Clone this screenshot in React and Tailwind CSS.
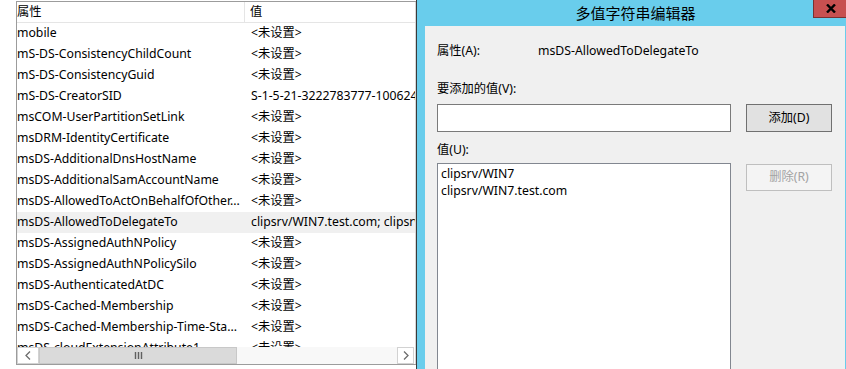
import React from 'react';

const ROWS = [
  ['mobile', '<未设置>'],
  ['mS-DS-ConsistencyChildCount', '<未设置>'],
  ['mS-DS-ConsistencyGuid', '<未设置>'],
  ['mS-DS-CreatorSID', 'S-1-5-21-3222783777-1006248391-1234567890-1105'],
  ['msCOM-UserPartitionSetLink', '<未设置>'],
  ['msDRM-IdentityCertificate', '<未设置>'],
  ['msDS-AdditionalDnsHostName', '<未设置>'],
  ['msDS-AdditionalSamAccountName', '<未设置>'],
  ['msDS-AllowedToActOnBehalfOfOther...', '<未设置>'],
  ['msDS-AllowedToDelegateTo', 'clipsrv/WIN7.test.com; clipsrv/WIN7'],
  ['msDS-AssignedAuthNPolicy', '<未设置>'],
  ['msDS-AssignedAuthNPolicySilo', '<未设置>'],
  ['msDS-AuthenticatedAtDC', '<未设置>'],
  ['msDS-Cached-Membership', '<未设置>'],
  ['msDS-Cached-Membership-Time-Sta...', '<未设置>'],
  ['msDS-cloudExtensionAttribute1', '<未设置>'],
];

const SELECTED = 'msDS-AllowedToDelegateTo';

const Chevron = ({ dir }) => (
  <svg width="6" height="9" viewBox="0 0 6 9">
    <path
      d={dir === 'left' ? 'M5 0.5 L1 4.5 L5 8.5' : 'M1 0.5 L5 4.5 L1 8.5'}
      fill="none"
      stroke="#6d6d6d"
      strokeWidth="1.3"
    />
  </svg>
);

const App = () => {
  return (
    <div
      className="w-[846px] h-[369px] flex overflow-hidden bg-white text-[12.25px] text-black"
      style={{ fontFamily: '"Noto Sans", "Noto Sans CJK SC", sans-serif' }}
    >
      {/* 属性列表 */}
      <div className="w-[416px] h-full shrink-0 bg-white pl-[16px] pt-[1px] pb-[4px] flex">
        <div className="flex-1 flex border-l border-t border-b border-[#9c9c9c] bg-white overflow-hidden">
          <div className="w-[398px] shrink-0 flex flex-col">
            <div className="h-[21px] shrink-0 flex items-center border-b border-[#e5e5e5]">
              <div className="w-[228px] h-full flex items-center border-r border-[#e5e5e5]">属性</div>
              <div className="pl-[5px]">值</div>
            </div>
            <div className="flex-1 overflow-hidden">
              {ROWS.map(([name, value]) => (
                <div
                  key={name}
                  className={`h-[21px] flex items-center whitespace-nowrap ${name === SELECTED ? 'bg-[#f0f0f0]' : ''}`}
                >
                  <div className="w-[228px] shrink-0 overflow-hidden">{name}</div>
                  <div className="pl-[6px] overflow-hidden">{value}</div>
                </div>
              ))}
            </div>
            <div className="h-[17px] shrink-0 flex bg-[#f8f8f8] mr-[1px]">
              <div className="w-[22px] flex items-center justify-center border border-[#d2d2d2] bg-white">
                <Chevron dir="left" />
              </div>
              <div className="w-[198px] flex items-center justify-center bg-[#dadada] border border-[#c8c8c8]">
                <svg width="9" height="7" viewBox="0 0 9 7">
                  <path d="M1.5 0 V7 M4.5 0 V7 M7.5 0 V7" stroke="#606060" strokeWidth="1.4" />
                </svg>
              </div>
              <div className="flex-1" />
              <div className="w-[17px] flex items-center justify-center border border-[#d2d2d2] bg-white">
                <Chevron dir="right" />
              </div>
            </div>
          </div>
          <div className="flex-1 border-l border-[#d6d6d6] bg-[#f0f0f0]" />
        </div>
      </div>

      {/* 多值字符串编辑器 */}
      <div className="flex-1 h-full flex flex-col border-l border-[#3a3a3a] bg-[#69cdec]">
        <div className="h-[26px] shrink-0 relative flex items-center justify-center pl-[8px] text-[15px]">
          多值字符串编辑器
          <div className="absolute top-0 right-[-1px] w-[34px] h-[18px] bg-[#c75050] border-l border-b border-[#7a3131] flex items-center justify-center">
            <svg width="10" height="9" viewBox="0 0 10 9">
              <path d="M1 0.5 L9 8.5 M9 0.5 L1 8.5" stroke="#000" strokeWidth="2.4" />
            </svg>
          </div>
        </div>
        <div className="flex-1 flex pl-[8px] pr-[1px] min-h-0">
          <div className="flex-1 bg-[#f0f0f0] pt-[17px] pl-[12px] flex flex-col min-h-0">
            <div className="flex leading-[16px]">
              <div className="w-[101px]">属性(A):</div>
              <div>msDS-AllowedToDelegateTo</div>
            </div>
            <div className="mt-[22px] leading-[16px]">要添加的值(V):</div>
            <div className="mt-[7px] flex">
              <div className="w-[294px] h-[28px] border border-[#7a7a7a] bg-white" />
              <div className="ml-[15px] w-[86px] h-[28px] border border-[#707070] bg-[#e1e1e1] flex items-center justify-center">
                添加(D)
              </div>
            </div>
            <div className="mt-[10px] leading-[16px]">值(U):</div>
            <div className="mt-[5px] flex flex-1 min-h-0">
              <div className="w-[294px] h-[240px] border border-[#828790] bg-white pt-[1px] pl-[3px] leading-[17px]">
                <div>clipsrv/WIN7</div>
                <div>clipsrv/WIN7.test.com</div>
              </div>
              <div className="ml-[15px] mt-[1px] w-[86px] h-[27px] border border-[#bfbfbf] bg-[#f4f4f4] text-[#a3a3a3] flex items-center justify-center">
                删除(R)
              </div>
            </div>
          </div>
        </div>
      </div>
    </div>
  );
};

export default App;
